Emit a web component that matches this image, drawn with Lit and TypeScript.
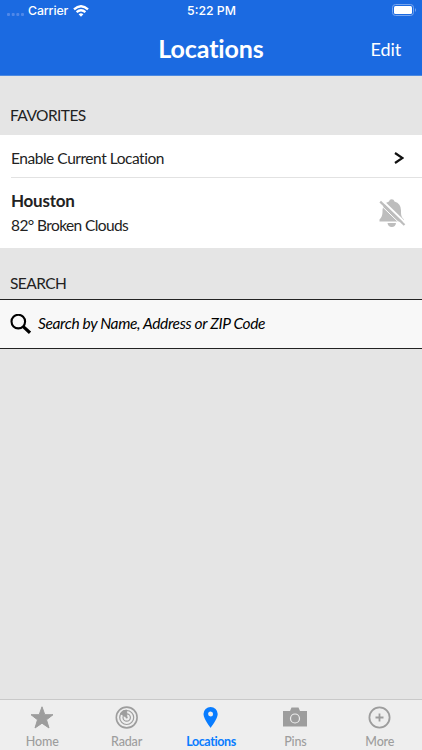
import { LitElement, html, css } from "lit";
import { customElement } from "lit/decorators.js";

@customElement("app-root")
class AppRoot extends LitElement {
  static styles = css`
    :host { display: flex; flex-direction: column; width: 422px; height: 750px; background: #e5e5e5; font-family: Lato, "Open Sans", sans-serif; font-variant-ligatures: none; color: #222; overflow: hidden; }
    * { box-sizing: border-box; }
    svg { display: block; flex: none; }
    span { white-space: nowrap; }
    header { height: 76px; background: #1b6ae1; color: #fff; border-bottom: 1px solid #4c89e0; flex: none; }
    .status { height: 21px; display: grid; grid-template-columns: 1fr auto 1fr; align-items: center; padding: 0 5px 0 6px; font: 500 12.3px/21px Inter, sans-serif; }
    .carrier { display: flex; align-items: center; }
    .carrier .name { margin: 0 5px 0 4px; width: 40px; letter-spacing: -0.1px; }
    .battery { justify-self: end; margin-bottom: 1px; }
    .nav { height: 54px; display: grid; grid-template-columns: 1fr auto 1fr; align-items: center; padding: 0 21px; }
    .title { grid-column: 2; font-size: 25px; font-weight: 700; line-height: 54px; letter-spacing: -0.1px; }
    .edit { justify-self: end; font-size: 18px; letter-spacing: -0.1px; padding-top: 2px; }
    .head { padding-left: 10px; font-size: 15.5px; line-height: 20px; letter-spacing: -0.55px; flex: none; }
    .fav { height: 59px; padding-top: 29px; }
    .srch { height: 51px; padding-top: 25px; }
    .row { background: #fff; display: flex; align-items: center; justify-content: space-between; flex: none; }
    .enable { height: 42px; padding: 4px 18px 0 11px; }
    .en { font-size: 15.5px; letter-spacing: -0.46px; line-height: 20px; }
    .rule { background: #fff; padding-left: 11px; flex: none; }
    .rule::before { content: ""; display: block; height: 1px; background: #e2e2e2; }
    .city { height: 70px; padding: 0 16px 0 11px; }
    .place { display: flex; flex-direction: column; }
    .houston { font-size: 17px; font-weight: 700; line-height: 24px; letter-spacing: -0.25px; }
    .cond { font-size: 15.5px; line-height: 24px; letter-spacing: -0.6px; }
    .field { height: 50px; flex: none; display: flex; align-items: center; background: #f8f8f8; border: solid #222; border-width: 1px 0; padding-left: 10px; gap: 7px; color: #000; }
    .hint { font-size: 15.5px; font-style: italic; letter-spacing: -0.36px; margin-bottom: 2px; }
    .fill { flex: 1; }
    nav { height: 51px; flex: none; display: grid; grid-template-columns: repeat(5, 1fr); background: #eee; border-top: 1px solid #c9c9c9; color: #9d9d9d; }
    .tab { display: flex; flex-direction: column; align-items: center; padding-top: 5px; }
    .tab span { font-size: 12.5px; line-height: 16px; margin-top: 3px; font-weight: 500; letter-spacing: -0.15px; }
    .tab.on { color: #087cff; }
    .tab.on span { font-weight: 700; letter-spacing: -0.4px; }
  `;
  render() {
    return html`
      <header>
        <div class="status">
          <div class="carrier">
            <svg width="18" height="16" fill="#5088e8"><rect x="1" y="10" width="3" height="3" rx="1"/><rect x="5.700" y="10" width="3" height="3" rx="1"/><rect x="10.300" y="10" width="3" height="3" rx="1"/><rect x="15" y="10" width="3" height="3" rx="1"/></svg>
            <span class="name">Carrier</span>
            <svg width="16" height="12" viewBox="0 0 16 12" fill="none" stroke="#fff" stroke-width="2.300"><path d="M1 4.400Q8-2 15 4.400M3.600 7.200Q8 3.200 12.400 7.200"/><path d="M8 11.700 5.600 9.200Q8 7.200 10.400 9.200Z" fill="#fff" stroke="none"/></svg>
          </div>
          <span>5:22 PM</span>
          <svg class="battery" width="25" height="12" viewBox="0 0 25 12"><rect x=".5" y=".5" width="21" height="11" rx="3" fill="none" stroke="#78a6ee"/><rect x="2" y="2" width="18" height="8" rx="1.500" fill="#fff"/><path d="M23 4Q25 6 23 8Z" fill="#78a6ee"/></svg>
        </div>
        <div class="nav"><span class="title">Locations</span><span class="edit">Edit</span></div>
      </header>
      <div class="head fav"><span>FAVORITES</span></div>
      <div class="row enable"><span class="en">Enable Current Location</span>
        <svg width="10" height="12" fill="none" stroke="#111" stroke-width="2.200"><path d="M1 1 8.500 6 1 11"/></svg></div>
      <div class="rule"></div>
      <div class="row city">
        <div class="place"><span class="houston">Houston</span><span class="cond">82° Broken Clouds</span></div>
        <svg width="27" height="28" viewBox="0 0 27 28" fill="#bdbdbd"><path d="M.5 22.500V20.500Q3.500 17.500 3.500 13V11Q4 4.500 10 2.500Q10.500.3 12.700.3T15.500 2.500Q22 4.500 22 11.500V14Q22 18 25 20.500V22.500ZM8.500 24H17Q16.500 28 12.800 28T8.500 24Z"/><path d="M2.500 .8 27 24.500" stroke="#fff" stroke-width="2"/><path d="M0 4.400 24.500 28" stroke="#fff" stroke-width="1"/><path d="M1.200 2.600 25.500 26" stroke="#bdbdbd" stroke-width="2.200"/></svg>
      </div>
      <div class="head srch"><span>SEARCH</span></div>
      <div class="field">
        <svg width="21" height="21" fill="none" stroke="#000"><circle cx="8.300" cy="7.600" r="6.800" stroke-width="2.100"/><path d="m13 12.300 7 6.500" stroke-width="3.200"/></svg>
        <span class="hint">Search by Name, Address or ZIP Code</span>
      </div>
      <div class="fill"></div>
      <nav>
        <div class="tab"><svg width="24" height="26" viewBox="0 0 24 26"><path fill="currentColor" stroke="currentColor" stroke-linejoin="round" d="M12 1.800 14.800 9.700H23L16.500 14.800 19 23 12 18.200 5 23 7.500 14.800 1 9.700H9.200Z"/></svg><span>Home</span></div>
        <div class="tab"><svg width="24" height="26" viewBox="0 0 24 26" fill="none" stroke="currentColor"><circle cx="11.700" cy="12.500" r="10.400" stroke-width="1.600"/><circle cx="11.700" cy="12.500" r="7" stroke-width="1.200"/><circle cx="11.700" cy="12.500" r="3.700" stroke-width="1.200"/><circle cx="11.700" cy="12.500" r="1" fill="currentColor" stroke="none"/><path d="M11.700 12.500V5A7.500 7.500 0 0 0 5.200 8.500Z" fill="currentColor"/></svg><span>Radar</span></div>
        <div class="tab on"><svg width="24" height="26" viewBox="0 0 24 26"><path fill="currentColor" fill-rule="evenodd" d="M11.600 2A7.100 7.100 0 0 0 4.500 9C4.500 14 11.600 22.800 11.600 22.800S18.700 14 18.700 9A7.100 7.100 0 0 0 11.600 2ZM11.600 6.500A2.500 2.500 0 1 1 11.600 11.500A2.500 2.500 0 0 1 11.600 6.500Z"/></svg><span>Locations</span></div>
        <div class="tab"><svg width="24" height="26" viewBox="0 0 24 26"><path fill="currentColor" d="M0 6H7L8.500 2.500H15.500L17 6H24V21.500H0Z"/><circle cx="12" cy="13.500" r="4.500" fill="none" stroke="#eee" stroke-width="1.200"/></svg><span>Pins</span></div>
        <div class="tab"><svg width="24" height="26" viewBox="0 0 24 26" fill="none" stroke="currentColor" stroke-width="1.800"><circle cx="11.500" cy="12.500" r="10.100"/><path d="M7.500 12.500H15.500M11.500 8.500V16.500"/></svg><span>More</span></div>
      </nav>`;
  }
}
